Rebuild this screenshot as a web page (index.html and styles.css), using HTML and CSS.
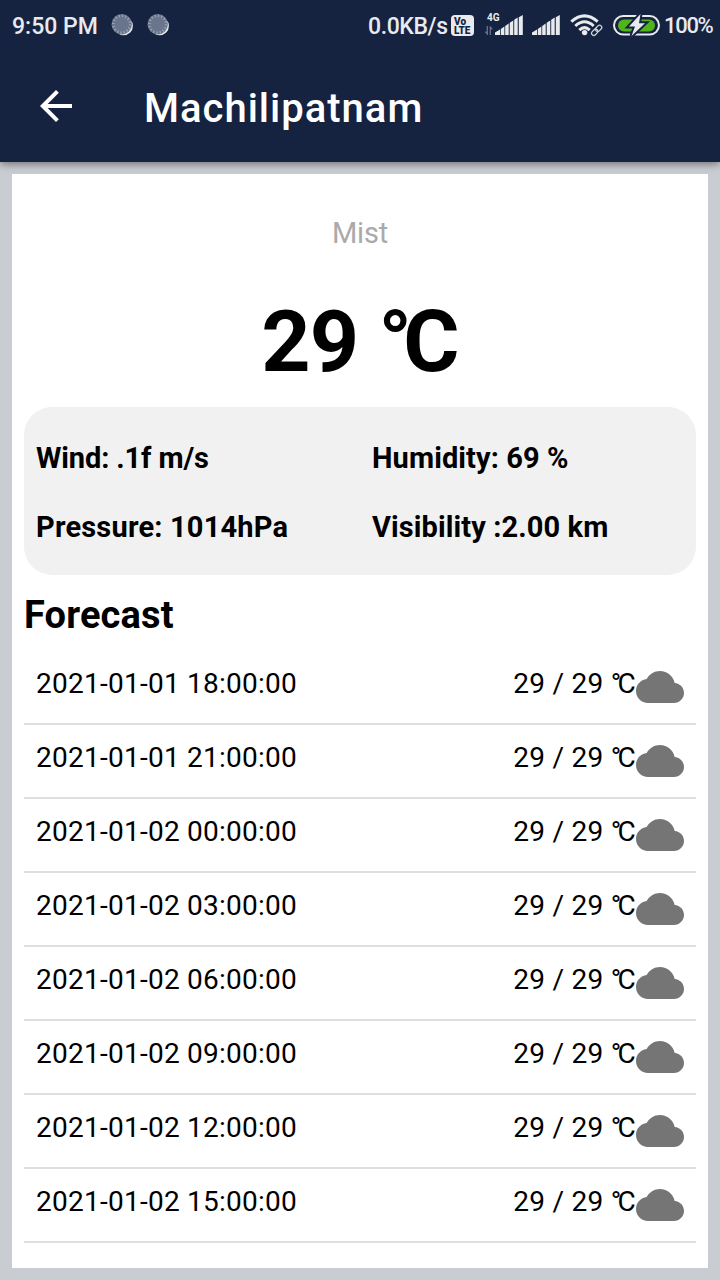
FILE: index.html
```html
<!DOCTYPE html>
<html lang="en">
<head>
<meta charset="utf-8">
<title>Machilipatnam</title>
<link rel="stylesheet" href="styles.css">
</head>
<body>
<svg class="defs" width="0" height="0" aria-hidden="true">
  <symbol id="cloud" viewBox="0 0 24 24"><path d="M19.35 10.04C18.67 6.59 15.64 4 12 4 9.11 4 6.6 5.64 5.35 8.04 2.34 8.36 0 10.91 0 14c0 3.31 2.69 6 6 6h13c2.76 0 5-2.24 5-5 0-2.64-2.05-4.78-4.65-4.96z"/></symbol>
  <symbol id="moon" viewBox="0 0 24 24">
    <circle cx="12.600" cy="13" r="9.300" fill="#e8eaee"/>
    <circle cx="10.700" cy="11.200" r="10.200" fill="#69758c"/>
    <circle cx="10.700" cy="11.200" r="8.400" fill="none" stroke="#9ca4b2" stroke-width="2.600" stroke-dasharray="1.200 2.100"/>
  </symbol>
  <symbol id="bars" viewBox="0 0 28 20">
    <path d="M0 20v-2.600l5-3V20zM5.800 20v-6l3.600-2.400V20zM10.200 20v-9l3.500-2.400V20zM14.700 20V7.800l3.600-2.400V20zM19.200 20V4.800l3.500-2.400V20zM23.800 20V2.200l4-2.200v20z"/>
  </symbol>
</svg>
<header class="top">
  <div class="status">
    <span class="time">9:50 PM</span>
    <svg class="moon"><use href="#moon"/></svg>
    <svg class="moon"><use href="#moon"/></svg>
    <span class="speed">0.0KB/s</span>
    <div class="volte"><span>Vo</span><span>LTE</span></div>
    <div class="mobile">
      <span class="gen">4G</span>
      <svg class="data" viewBox="0 0 8 9"><path d="M2.300 0v8L.3 5.600M5.300 9V1l2 2.400" fill="none" stroke="#68748a" stroke-width="1.300"/></svg>
      <svg class="bars"><use href="#bars"/></svg>
    </div>
    <svg class="bars second"><use href="#bars"/></svg>
    <svg class="wifi" viewBox="0 0 33 23">
      <g fill="none" stroke="#e8eaee" stroke-width="3">
        <path d="M1.300 7.600Q14.500-3.800 27.700 7.600"/>
        <path d="M5.300 12Q14.500 3.600 23.700 12"/>
        <path d="M9.300 16.200Q14.500 11.200 19.700 16.200"/>
      </g>
      <circle cx="14.600" cy="18.600" r="2.700" fill="#e8eaee"/>
      <g fill="none" stroke="#152341" stroke-width="4" transform="rotate(-45 26.500 16.500)"><rect x="20.500" y="14" width="7" height="5" rx="2.500"/><rect x="26" y="14" width="7" height="5" rx="2.500"/></g>
      <g fill="none" stroke="#cdd1d9" stroke-width="1.300" transform="rotate(-45 26.500 16.500)"><rect x="20.500" y="14.300" width="7" height="4.400" rx="2.200"/><rect x="26" y="14.300" width="7" height="4.400" rx="2.200"/></g>
    </svg>
    <svg class="battery" viewBox="0 0 47 22">
      <rect x="1" y="2" width="45" height="18.600" rx="9.300" fill="none" stroke="#e8eaee" stroke-width="2"/>
      <rect x="5" y="5.400" width="37" height="12" rx="6" fill="#4fb51b"/>
      <path d="M27.500 0L16 12.600h6L18.500 22 32 9.300h-6z" fill="#e8eaee" stroke="#152341" stroke-width="4" paint-order="stroke"/>
    </svg>
    <span class="percent">100%</span>
  </div>
  <div class="appbar">
    <svg class="back" viewBox="0 0 24 24"><path d="M20 11H7.830l5.590-5.590L12 4l-8 8 8 8 1.410-1.410L7.830 13H20v-2z"/></svg>
    <h1 class="title">Machilipatnam</h1>
  </div>
</header>
<main class="card">
  <p class="condition">Mist</p>
  <p class="temperature">29 <span class="degree">°</span>C</p>
  <section class="details">
    <span class="wind">Wind: .1f m/s</span><span>Humidity: 69 %</span>
    <span class="pressure">Pressure: 1014hPa</span><span>Visibility :2.00 km</span>
  </section>
  <h2 class="heading">Forecast</h2>
  <ul class="forecast">
    <li class="row"><span>2021-01-01 18:00:00</span><span class="range">29 / 29 <span class="degree">°</span>C</span><svg class="cloud"><use href="#cloud"/></svg></li>
    <li class="row"><span>2021-01-01 21:00:00</span><span class="range">29 / 29 <span class="degree">°</span>C</span><svg class="cloud"><use href="#cloud"/></svg></li>
    <li class="row"><span>2021-01-02 00:00:00</span><span class="range">29 / 29 <span class="degree">°</span>C</span><svg class="cloud"><use href="#cloud"/></svg></li>
    <li class="row"><span>2021-01-02 03:00:00</span><span class="range">29 / 29 <span class="degree">°</span>C</span><svg class="cloud"><use href="#cloud"/></svg></li>
    <li class="row"><span>2021-01-02 06:00:00</span><span class="range">29 / 29 <span class="degree">°</span>C</span><svg class="cloud"><use href="#cloud"/></svg></li>
    <li class="row"><span>2021-01-02 09:00:00</span><span class="range">29 / 29 <span class="degree">°</span>C</span><svg class="cloud"><use href="#cloud"/></svg></li>
    <li class="row"><span>2021-01-02 12:00:00</span><span class="range">29 / 29 <span class="degree">°</span>C</span><svg class="cloud"><use href="#cloud"/></svg></li>
    <li class="row"><span>2021-01-02 15:00:00</span><span class="range">29 / 29 <span class="degree">°</span>C</span><svg class="cloud"><use href="#cloud"/></svg></li>
  </ul>
</main>
</body>
</html>
```
FILE: styles.css
```css
* { box-sizing: border-box; margin: 0; padding: 0; }
body {
  width: 720px; height: 1280px; overflow: hidden;
  display: flex; flex-direction: column;
  background: #c9ccd1; color: #000;
  font-family: Roboto, "Noto Sans", sans-serif;
}
svg { display: block; flex: none; }
.defs { position: absolute; }
.top { height: 162px; flex: none; background: #152341; box-shadow: 0 2px 8px rgba(0,0,0,.45); }
.status {
  height: 50px; display: flex; align-items: center; padding-left: 12px;
  color: #e8eaee; font-size: 23px; font-weight: 500; white-space: nowrap;
}
.time { width: 99px; padding-top: 2px; }
.moon { width: 24px; height: 24px; margin-right: 12px; }
.speed { margin-left: 185px; width: 82px; padding-top: 2px; letter-spacing: -.4px; }
.volte {
  width: 23px; height: 21px; margin: 1px 0 0 1px; border-radius: 4px; background: #e8eaee;
  color: #152341; font-size: 10px; line-height: 9px; font-weight: 900; padding: 2px 0 0 3px;
  display: flex; flex-direction: column;
}
.mobile {
  width: 38px; height: 22px; margin: 0 0 2px 11px;
  display: grid; grid-template-columns: 10px 28px; grid-template-rows: 9px 13px; align-items: end;
}
.gen { font-size: 10px; line-height: 9px; font-weight: 700; padding-left: 2px; align-self: start; }
.data { width: 8px; height: 9px; grid-area: 2 / 1; }
.bars { width: 28px; height: 20px; fill: #e8eaee; }
.mobile .bars { grid-area: 1 / 2 / 3 / 3; }
.second { margin-left: 9px; }
.wifi { width: 33px; height: 23px; margin-left: 10px; }
.battery { width: 47px; height: 22px; margin-left: 10px; }
.percent { margin-left: 4px; padding-top: 1px; font-size: 22px; letter-spacing: -1.3px; }
.appbar { height: 112px; display: flex; align-items: center; padding-left: 32px; color: #fff; }
.back { width: 48px; height: 48px; fill: currentColor; }
.title { margin: 6px 0 0 64px; font-size: 40px; font-weight: 500; letter-spacing: 1px; line-height: 48px; }
.card {
  margin: 12px; height: 1094px; padding: 39px 12px 0; background: #fff;
  display: flex; flex-direction: column;
}
.condition { height: 41px; line-height: 40px; text-align: center; font-size: 29px; letter-spacing: -.2px; color: #aaa; }
.temperature { height: 153px; line-height: 176px; text-align: center; font-size: 86px; font-weight: 700; letter-spacing: -1px; white-space: nowrap; }
.degree { letter-spacing: -.13em; }
.temperature .degree { letter-spacing: -.1em; }
.details {
  height: 168px; padding: 16px 12px 14px; border-radius: 28px; background: #f1f1f1;
  display: grid; grid-template-columns: 336px 1fr; grid-template-rows: 69px 69px; align-items: center;
  font-size: 29px; font-weight: 700; letter-spacing: .1px;
}
.wind { letter-spacing: -.12px; }
.pressure { letter-spacing: .19px; }
.heading { height: 76px; line-height: 80px; font-size: 38px; font-weight: 700; letter-spacing: .15px; }
.forecast { list-style: none; }
.row {
  height: 74px; padding: 12px; display: flex; border-bottom: 2px solid #dedede;
  font-size: 28px; letter-spacing: .25px; line-height: 41px; white-space: nowrap;
}
.range { margin-left: auto; }
.cloud { width: 48px; height: 48px; fill: #757575; }
```
